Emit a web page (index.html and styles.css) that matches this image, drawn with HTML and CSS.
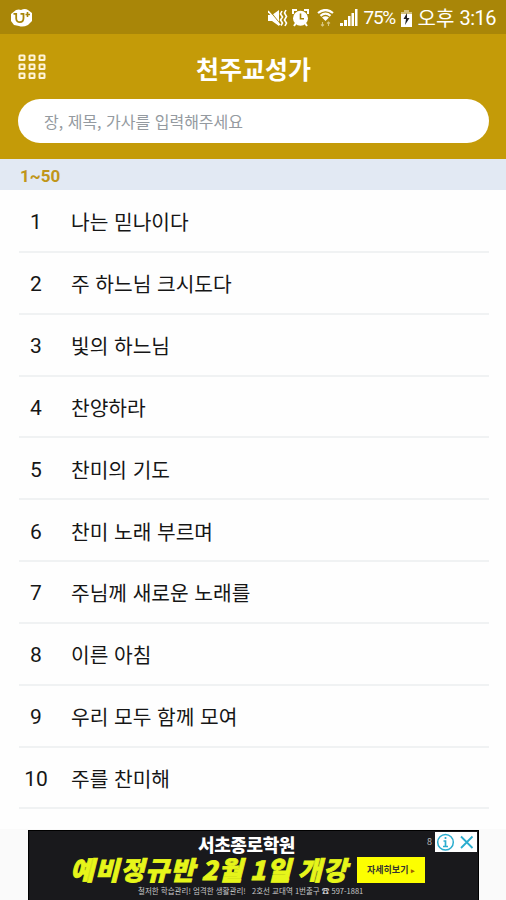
FILE: index.html
```html
<!DOCTYPE html>
<html lang="ko">
<head>
    <meta charset="UTF-8">
    <meta name="viewport" content="width=device-width, initial-scale=1.0">
    <title>천주교성가</title>
    <link rel="stylesheet" href="styles.css">
</head>
<body>
    <div class="status-bar">
        <svg class="logo" width="22" height="18" viewBox="0 0 22 18">
            <path d="M5 1Q8 0 10 1Q14-1 17 1L21 4V12L17 16Q12 18.500 8 17L3 16L0 12V5Z" fill="#fff"/>
            <path d="M2.500 4.800H5.200V9.500C5.200 14.500 12.500 14.500 12.500 9V4.800H9.500" fill="none" stroke="#a98608" stroke-width="1.800"/>
            <path d="M16.500 3V8M14.500 5.500H19" stroke="#a98608" stroke-width="1.600"/>
        </svg>
        <div class="status-icons">
            <svg width="20" height="18" viewBox="0 0 20 18">
                <path d="M0 6H4L11 1V17L4 12H0Z" fill="#fff"/>
                <path d="M1 1L13 16" stroke="#a98608" stroke-width="1.200"/>
                <path d="M0 2L12 16" stroke="#fff" stroke-width="1.500"/>
                <path d="M14 2L12.500 5L14.500 8L12.500 11L14.500 14L13 16.500M18 1L16.500 4L18.500 7.500L16.500 11L18.500 14L17 17" fill="none" stroke="#fff" stroke-width="1.600"/>
            </svg>
            <svg class="alarm" width="17" height="18" viewBox="0 0 17 18">
                <path d="M1 5V1H5M12 1H16V5M2 17L4 14M15 17L13 14" fill="none" stroke="#fff" stroke-width="2"/>
                <circle cx="8.500" cy="9.300" r="7.500" fill="#fff"/>
                <path d="M8.500 4.500V9.800H12" fill="none" stroke="#a98608" stroke-width="1.600"/>
            </svg>
            <svg class="wifi" width="17" height="18" viewBox="0 0 17 18">
                <path d="M1 4Q8.500-2 16 4M3.500 6.800Q8.500 2.500 13.500 6.800" fill="none" stroke="#fff" stroke-width="2.200"/>
                <path d="M5 8.500Q8.500 6 12 8.500L8.500 12Z" fill="#fff"/>
                <path d="M5.500 13V17M4 15.500L5.500 17L7 15.500M11.500 17V13M10 14.500L11.500 13L13 14.500" fill="none" stroke="#d9c680" stroke-width="1.100"/>
            </svg>
            <svg class="signal" width="18" height="18" viewBox="0 0 18 18">
                <path d="M0 17V14H3V17ZM4 17V11H7V17ZM8 17V7H10.500V17ZM11.500 17V4H14V17ZM15 17V0H17.500V17Z" fill="#fff"/>
            </svg>
            <span class="percent">75%</span>
            <svg class="battery" width="11" height="18" viewBox="0 0 11 18">
                <path d="M3 1H8V3H11V18H0V3H3Z" fill="#fff"/>
                <path d="M0 3H3V1H8V3H11V5H0Z" fill="#d3c07c"/>
                <path d="M6 4L2.500 10H5L4 16L8.500 9H6Z" fill="#222"/>
            </svg>
            <span class="ampm">오후</span>
            <span class="clock">3:16</span>
        </div>
    </div>

    <header class="header">
        <div class="title-row">
            <svg class="menu" width="28" height="26" viewBox="0 0 28 26">
                <g fill="none" stroke="#fff4d8" stroke-width="2">
                    <rect x="1.500" y="1.400" width="5" height="4.600" rx=".5"/>
                    <rect x="11.500" y="1.400" width="5" height="4.600" rx=".5"/>
                    <rect x="21.500" y="1.400" width="5" height="4.600" rx=".5"/>
                    <rect x="1.500" y="10.400" width="5" height="4.600" rx=".5"/>
                    <rect x="11.500" y="10.400" width="5" height="4.600" rx=".5"/>
                    <rect x="21.500" y="10.400" width="5" height="4.600" rx=".5"/>
                    <rect x="1.500" y="19.400" width="5" height="4.600" rx=".5"/>
                    <rect x="11.500" y="19.400" width="5" height="4.600" rx=".5"/>
                    <rect x="21.500" y="19.400" width="5" height="4.600" rx=".5"/>
                </g>
            </svg>
            <h1>천주교성가</h1>
        </div>
        <input class="search" type="text" placeholder="장, 제목, 가사를 입력해주세요">
    </header>

    <div class="range">1~50</div>

    <ul class="song-list">
        <li><span class="no">1</span><span>나는 믿나이다</span></li>
        <li><span class="no">2</span><span>주 하느님 크시도다</span></li>
        <li><span class="no">3</span><span>빛의 하느님</span></li>
        <li><span class="no">4</span><span>찬양하라</span></li>
        <li><span class="no">5</span><span>찬미의 기도</span></li>
        <li><span class="no">6</span><span>찬미 노래 부르며</span></li>
        <li><span class="no">7</span><span>주님께 새로운 노래를</span></li>
        <li><span class="no">8</span><span>이른 아침</span></li>
        <li><span class="no">9</span><span>우리 모두 함께 모여</span></li>
        <li><span class="no">10</span><span>주를 찬미해</span></li>
    </ul>

    <div class="ad-area">
        <div class="ad">
            <div class="ad-text">
                <div class="ad-name">서초종로학원</div>
                <div class="ad-main">예비정규반 2월 1일 개강</div>
                <div class="ad-sub">철저한 학습관리! 엄격한 생활관리! &nbsp; 2호선 교대역 1번출구 ☎ 597-1881</div>
            </div>
            <div class="ad-btn">자세히보기 <b>▸</b></div>
            <span class="ad-mark">8</span>
            <div class="ad-choices">
                <svg width="42" height="20" viewBox="0 0 42 20">
                    <circle cx="10.500" cy="10.200" r="7.800" fill="none" stroke="#2badcf" stroke-width="1.500"/>
                    <path d="M10.500 5V7M8.500 9H10.500V14.500M8 14.500H13" fill="none" stroke="#2badcf" stroke-width="1.700"/>
                    <path d="M26 4.500L37.500 16M37.500 4.500L26 16" stroke="#2badcf" stroke-width="1.800"/>
                </svg>
            </div>
        </div>
    </div>
</body>
</html>
```
FILE: styles.css
```css
* {
    box-sizing: border-box;
}
body {
    margin: 0;
    height: 900px;
    overflow: hidden;
    display: flex;
    flex-direction: column;
    background: #fefefe;
    color: #161616;
    font-family: Roboto, "Noto Sans CJK KR", sans-serif;
}
svg {
    display: block;
    flex: none;
}
.status-bar {
    height: 34px;
    flex: none;
    background: #a98608;
    color: #fff;
    display: flex;
    justify-content: space-between;
    align-items: center;
    padding: 2px 10px 0 11px;
}
.status-icons {
    display: flex;
    align-items: center;
    font-size: 20px;
    line-height: 34px;
    white-space: nowrap;
}
.alarm {
    margin-left: 4px;
}
.wifi {
    margin-left: 8px;
}
.signal {
    margin-left: 6px;
}
.percent {
    width: 33px;
    margin-left: 6px;
    font-size: 19px;
    letter-spacing: -1.3px;
}
.battery {
    margin-left: 4px;
}
.ampm {
    margin-left: 6px;
    font-family: "Noto Sans CJK KR", sans-serif;
}
.clock {
    margin-left: 5px;
    letter-spacing: -0.5px;
}
.header {
    height: 125px;
    flex: none;
    background: #c49b08;
    padding: 0 17px 0 18px;
}
.title-row {
    height: 65px;
    display: grid;
    grid-template-columns: 28px 1fr 28px;
    align-items: center;
}
.header h1 {
    margin: 2px 0 0;
    color: #fff;
    font-family: "Noto Sans CJK KR", sans-serif;
    font-size: 25px;
    font-weight: 700;
    line-height: 36px;
    text-align: center;
}
.search {
    display: block;
    width: 100%;
    height: 44px;
    border: none;
    border-radius: 22px;
    background: #fff;
    padding: 0 26px;
    outline: none;
    font-family: "Noto Sans CJK KR", sans-serif;
    font-size: 16px;
}
.search::placeholder {
    color: #949aa0;
    opacity: 1;
}
.range {
    height: 31px;
    flex: none;
    background: #e2e9f3;
    color: #c0961a;
    padding-left: 20px;
    font-size: 17px;
    font-weight: 700;
    line-height: 34px;
}
.song-list {
    list-style: none;
    margin: 0;
    padding: 1px 17px 0 19px;
    flex: 1;
}
.song-list li {
    height: 61.85px;
    display: flex;
    align-items: center;
    border-bottom: 2px solid #f0f2f3;
    padding-top: 1px;
    font-family: "Noto Sans CJK KR", sans-serif;
    font-size: 20.3px;
}
.song-list .no {
    width: 34px;
    margin-right: 18px;
    padding-top: 2px;
    font-family: Roboto, sans-serif;
    font-size: 21px;
    text-align: center;
}
.ad-area {
    height: 71px;
    flex: none;
    background: #fafafa;
    padding: 1px 27px 0 28px;
}
.ad {
    position: relative;
    height: 70px;
    background: #19191c;
    border: 1px solid #000;
    border-bottom: none;
    color: #fff;
    display: flex;
    font-family: "Noto Sans CJK KR", sans-serif;
    white-space: nowrap;
}
.ad-text {
    width: 287px;
    margin-left: 41px;
    display: flex;
    flex-direction: column;
    align-items: flex-start;
}
.ad-name {
    height: 24px;
    margin-left: 128px;
    font-size: 18px;
    font-weight: 900;
    line-height: 27px;
    letter-spacing: -0.4px;
}
.ad-main {
    height: 28px;
    color: #e6f51a;
    font-size: 26px;
    font-weight: 900;
    font-style: italic;
    line-height: 27px;
    letter-spacing: 1.2px;
    word-spacing: -2.5px;
    -webkit-text-stroke: 0.8px #e6f51a;
}
.ad-sub {
    margin-left: 68px;
    color: #c8c8c8;
    font-size: 7.5px;
    line-height: 15px;
}
.ad-btn {
    width: 68px;
    height: 26px;
    margin: 26px 0 0 0;
    background: #fcff00;
    color: #333;
    font-size: 9px;
    font-weight: 700;
    line-height: 25px;
    text-align: center;
}
.ad-btn b {
    color: #a06000;
    font-size: 7px;
}
.ad-mark {
    position: absolute;
    top: 4px;
    right: 46px;
    color: #bbb;
    font-size: 9px;
    line-height: 14px;
}
.ad-choices {
    position: absolute;
    top: 1px;
    right: 1px;
    background: #fff;
}
```
